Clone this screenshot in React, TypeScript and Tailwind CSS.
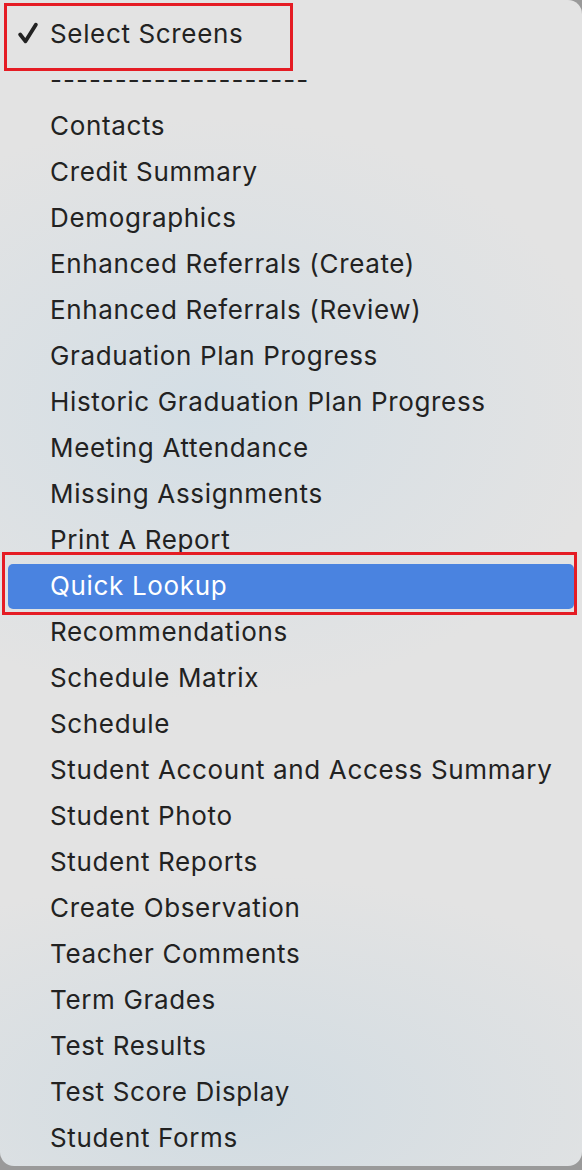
const items = [
  "--------------------",
  "Contacts",
  "Credit Summary",
  "Demographics",
  "Enhanced Referrals (Create)",
  "Enhanced Referrals (Review)",
  "Graduation Plan Progress",
  "Historic Graduation Plan Progress",
  "Meeting Attendance",
  "Missing Assignments",
  "Print A Report",
  "Quick Lookup",
  "Recommendations",
  "Schedule Matrix",
  "Schedule",
  "Student Account and Access Summary",
  "Student Photo",
  "Student Reports",
  "Create Observation",
  "Teacher Comments",
  "Term Grades",
  "Test Results",
  "Test Score Display",
  "Student Forms",
];

function Check() {
  return (
    <svg width="20" height="22" viewBox="0 0 20 22" className="block">
      <path d="M2.2 12.5 L7.5 19.3 L17.8 2.7" fill="none" stroke="#222" strokeWidth="3.8" strokeLinecap="round" strokeLinejoin="round" />
    </svg>
  );
}

export default function App() {
  return (
    <div className="w-[582px] h-[1170px] bg-[#9a9a9a] overflow-hidden" style={{ fontFamily: 'Inter, "Liberation Sans", Arial, sans-serif' }}>
      <div className="relative w-full h-[1166px] rounded-tr-[14px] rounded-b-[14px] bg-[#e3e3e3] bg-[radial-gradient(ellipse_70%_25%_at_35%_35%,rgba(205,220,230,0.7),transparent),radial-gradient(ellipse_80%_20%_at_40%_95%,rgba(205,218,226,0.8),transparent)] pt-[11px] text-[#222] text-[26px] tracking-[0.65px]">
        <div className="flex items-center h-[46px] pb-[2px]">
          <div className="w-[50px] flex justify-end pr-[12px]">
            <Check />
          </div>
          <span>Select Screens</span>
        </div>
        {items.map((label) =>
          label === "Quick Lookup" ? (
            <div key={label} className="h-[46px] px-[8px] flex items-center">
              <div className="w-full h-[45px] rounded-[5px] bg-[#4a83e0] text-white flex items-center pl-[42px] pb-[2px]">
                {label}
              </div>
            </div>
          ) : label.startsWith("-") ? (
            <div key={label} className="h-[46px] flex items-center pl-[50px] pb-[2px] tracking-[1px]">
              {label}
            </div>
          ) : (
            <div key={label} className="h-[46px] flex items-center pl-[50px] pb-[2px]">
              {label}
            </div>
          )
        )}
        <div className="absolute left-[4px] top-[3px] w-[289px] h-[68px] border-[3px] border-[#e51c24]" />
        <div className="absolute left-[2px] top-[552px] w-[575px] h-[63px] border-[3px] border-[#e51c24]" />
      </div>
    </div>
  );
}
